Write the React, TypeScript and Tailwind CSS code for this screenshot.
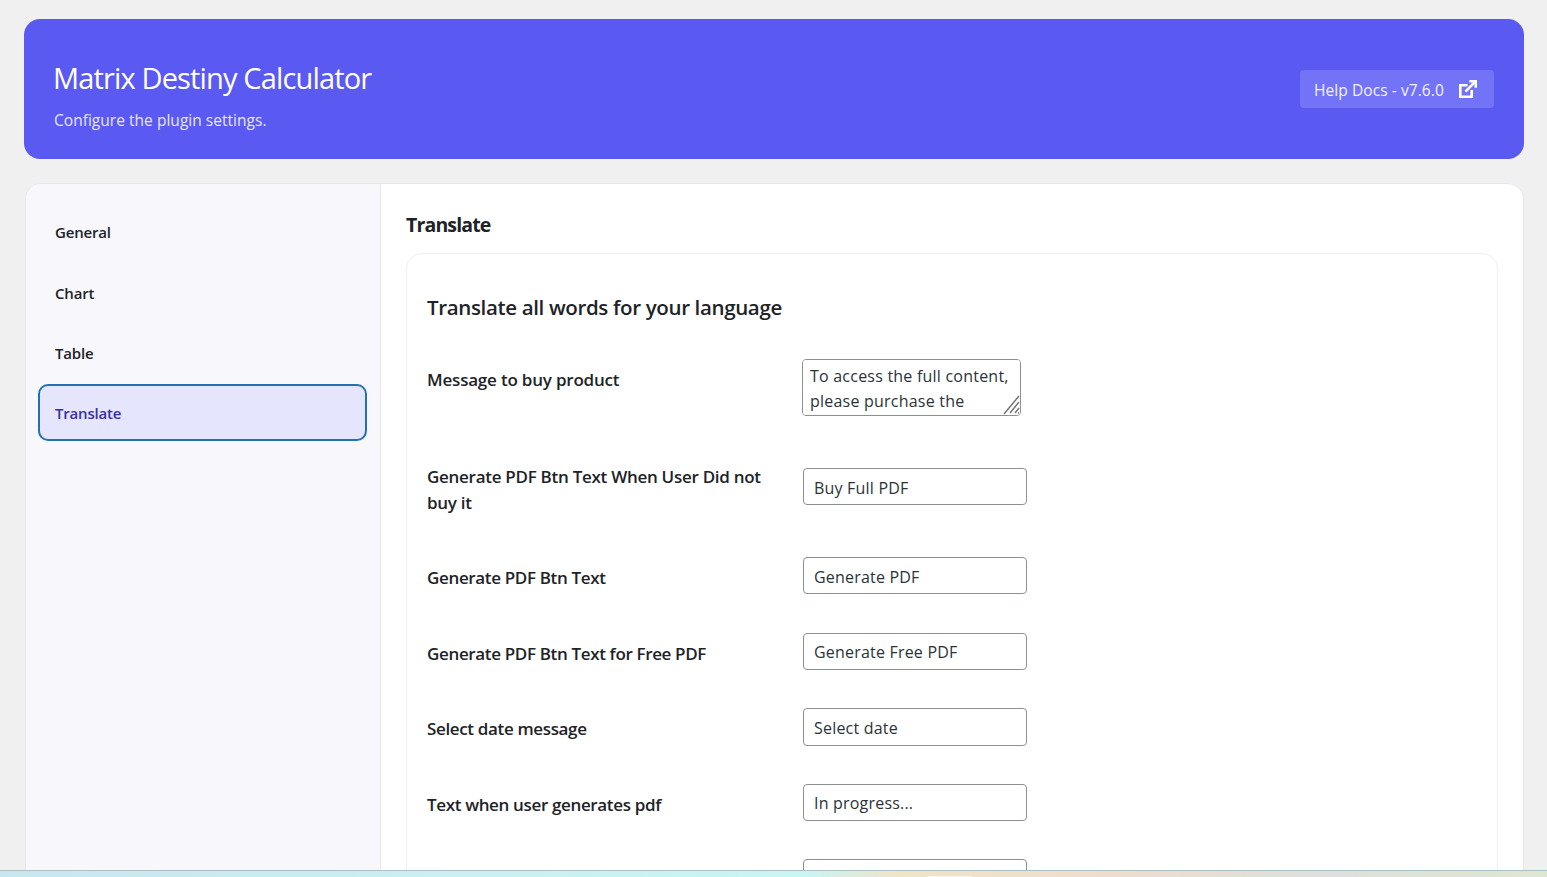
const navItems = ["General", "Chart", "Table", "Translate"];

const fields = [
  { label: "Generate PDF Btn Text", value: "Generate PDF" },
  { label: "Generate PDF Btn Text for Free PDF", value: "Generate Free PDF" },
  { label: "Select date message", value: "Select date" },
  { label: "Text when user generates pdf", value: "In progress..." },
  { label: "", value: "" },
];

function LinkIcon() {
  return (
    <svg width="18" height="18" viewBox="0 0 18 18" fill="none" stroke="currentColor" strokeWidth="2.6" className="block">
      <path d="M8.5 5.3H1.3v11.4h11.4V10" />
      <path d="M6.4 11.6 15.8 2.2" />
      <path d="M10.4 1.3h6.4v6.4" />
    </svg>
  );
}

function TextInput({ value }: { value: string }) {
  return (
    <input
      readOnly
      value={value}
      className="h-[37.4px] w-[224px] rounded-[4px] border border-[#8c8f94] bg-white px-[10px] pt-[2px] text-[16px] tracking-[0.2px] text-[#2c3338] outline-none"
    />
  );
}

export default function App() {
  return (
    <div className="h-screen overflow-hidden bg-[#f0f0f1] pl-[24px] pr-[23px] pt-[19px] font-['Open_Sans','Noto_Sans',sans-serif] text-[#1d2327]">
      <header className="flex h-[140px] items-center justify-between rounded-[16px] bg-[#5a5af3] px-[30px]">
        <div className="pt-[13px]">
          <h1 className="-ml-px text-[29px] leading-[38px] tracking-[-0.85px] text-white">Matrix Destiny Calculator</h1>
          <p className="mt-[11px] text-[15.5px] leading-[24px] tracking-[0.03px] text-[#e6e6ff]">Configure the plugin settings.</p>
        </div>
        <a className="flex h-[38px] w-[194px] items-center rounded-[4px] bg-[#7373f7] pl-[14px] text-[15.5px] tracking-[0.08px] text-[#f2f2ff]">
          <span className="w-[145px] pt-[3px]">Help Docs - v7.6.0</span>
          <span className="text-white"><LinkIcon /></span>
        </a>
      </header>

      <div className="ml-px mt-[24px] flex h-[760px] overflow-hidden rounded-[16px] border border-[#e7e7ef] bg-white">
        <aside className="w-[355px] shrink-0 border-r border-[#e7e7ef] bg-[#f7f7fc] pl-[12px] pr-[13px] pt-[19px]">
          <nav className="flex flex-col gap-[3.4px]">
            {navItems.map((item) => (
              <a
                key={item}
                className={
                  item === "Translate"
                    ? "flex h-[57px] items-center rounded-[10px] border-2 border-[#2271b1] bg-[#e5e5fd] pl-[15px] pt-[2px] text-[15px] font-semibold tracking-[-0.2px] text-[#3730a3]"
                    : "flex h-[57px] items-center rounded-[10px] border-2 border-transparent pl-[15px] pt-[2px] text-[15px] font-semibold tracking-[-0.2px] text-[#1d2327]"
                }
              >
                {item}
              </a>
            ))}
          </nav>
        </aside>

        <main className="flex-1 pl-[25px] pr-[25px] pt-[27px]">
          <h2 className="text-[19.5px] font-bold leading-[28px] tracking-[-0.85px] text-[#1d2327]">Translate</h2>
          <section className="mt-[14px] h-[700px] rounded-[16px] border border-[#f0f0f5] pl-[20px] pt-[37px]">
            <h3 className="text-[20.5px] font-semibold leading-[32px] tracking-[-0.35px]">Translate all words for your language</h3>

            <div className="mt-[36px] flex items-start">
              <label className="mt-[8px] w-[375px] text-[17px] font-semibold leading-[26px] tracking-[-0.2px]">Message to buy product</label>
              <div className="relative h-[57px] w-[219px]">
                <textarea
                  readOnly
                  value="To access the full content, please purchase the"
                  className="h-[57px] w-[219px] resize-none rounded-[4px] border border-[#8c8f94] bg-white px-[7px] py-[4px] text-[16px] leading-[25px] tracking-[0.22px] text-[#2c3338] outline-none"
                />
                <svg width="20" height="20" viewBox="0 0 20 20" stroke="#777" strokeWidth="1.5" className="absolute bottom-[1px] right-[1px]">
                  <path d="M19 1 4 19M19 7 10 18M19 13 15 18M18 18h1" />
                </svg>
              </div>
            </div>

            <div className="mb-[41px] mt-[48px] flex items-start">
              <label className="w-[376px] pr-[30px] text-[17px] font-semibold leading-[26px] tracking-[-0.28px]">Generate PDF Btn Text When User Did not buy it</label>
              <div className="mt-[4px]"><TextInput value="Buy Full PDF" /></div>
            </div>

            {fields.map((field) => (
              <div key={field.value || "last"} className="mb-[38.2px] flex items-start">
                <label className="mt-[8px] min-h-[26px] w-[376px] text-[17px] font-semibold leading-[26px] tracking-[-0.35px]">{field.label}</label>
                <TextInput value={field.value} />
              </div>
            ))}
          </section>
        </main>
      </div>

      <div className="fixed inset-x-0 bottom-0 h-[7px] border-t border-[#a9c0c4] bg-[linear-gradient(90deg,#c9e6ee_0%,#cbeff2_30%,#c9f5f3_52%,#f0e4c8_58%,#f0dccc_72%,#dde0dc_85%,#dfe6d0_100%)]">
        <div className="absolute bottom-0 left-[927px] h-px w-[45px] bg-[#f8f4e8]" />
      </div>
    </div>
  );
}
